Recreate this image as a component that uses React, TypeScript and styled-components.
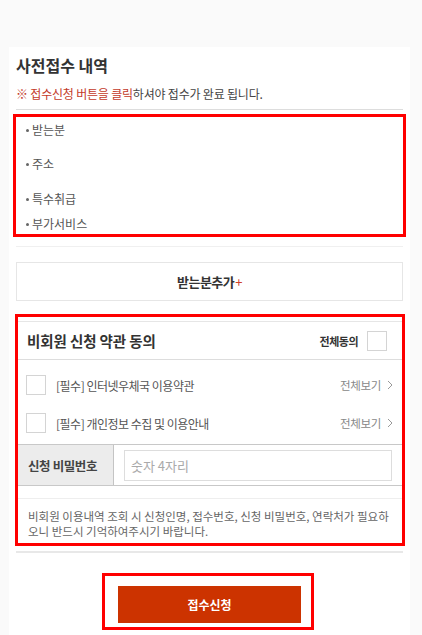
import React from "react";
import styled, { createGlobalStyle } from "styled-components";

const Global = createGlobalStyle`
  html, body {
    margin: 0;
    padding: 0;
    background: #fafafa;
  }
  body {
    font-family: "Noto Sans CJK KR", "Noto Sans", sans-serif;
    color: #333;
  }
  * { box-sizing: border-box; }
`;

const Panel = styled.div`
  margin: 47px 12px 0 9px;
  min-height: 588px;
  background: #fff;
  padding: 0 7px;
  display: flex;
  flex-direction: column;
`;

const Title = styled.h2`
  margin: 8px 0 0;
  font-size: 16px;
  line-height: 20px;
  font-weight: 700;
  color: #333;
`;

const Note = styled.p`
  margin: 11px 0 0;
  font-size: 12px;
  line-height: 16px;
  color: #444;
  letter-spacing: -0.2px;
`;

const Accent = styled.span`
  color: #c33a2a;
`;

const Divider = styled.hr<{ $color?: string; $top?: number; $size?: number }>`
  margin: ${(p) => p.$top ?? 0}px 0 0;
  border: 0;
  border-top: ${(p) => p.$size ?? 1}px solid ${(p) => p.$color ?? "#ddd"};
`;

const Highlight = styled.section<{ $left: number; $right: number; $top: number }>`
  margin: ${(p) => p.$top}px ${(p) => p.$right}px 0 ${(p) => p.$left}px;
  border: 3px solid #ff0000;
  display: flex;
  flex-direction: column;
`;

const ItemList = styled.ul`
  list-style: none;
  margin: 0;
  padding: 0 0 1px 10px;
`;

const Item = styled.li<{ $gap: number }>`
  margin-top: ${(p) => p.$gap}px;
  font-size: 12px;
  line-height: 18px;
  color: #555;
  display: flex;
  align-items: center;
  gap: 3px;
  &::before {
    content: "";
    width: 3px;
    height: 3px;
    border-radius: 50%;
    background: #666;
  }
`;

const AddButton = styled.button`
  margin-top: 15px;
  height: 39px;
  width: 100%;
  background: #fff;
  border: 1px solid #e6e6e6;
  font-family: inherit;
  font-size: 13px;
  font-weight: 700;
  color: #333;
  letter-spacing: -0.5px;
  cursor: pointer;
`;

const Plus = styled.span`
  color: #d0402a;
  font-weight: 400;
  margin-left: 1px;
`;

const TermsHead = styled.div`
  margin-top: 4px;
  border-top: 1px solid #e6e6e6;
  border-bottom: 1px solid #ddd;
  height: 39px;
  display: flex;
  align-items: center;
  justify-content: space-between;
  padding: 0 15px 0 9px;
`;

const TermsTitle = styled.h3`
  margin: 0;
  font-size: 14.5px;
  font-weight: 700;
  color: #333;
  letter-spacing: -0.1px;
`;

const AgreeAll = styled.label`
  display: flex;
  align-items: center;
  gap: 9px;
  font-size: 11px;
  font-weight: 700;
  color: #333;
  letter-spacing: -0.5px;
`;

const Box = styled.span<{ $size: number }>`
  width: ${(p) => p.$size}px;
  height: ${(p) => p.$size}px;
  border: 1px solid #d4d4d4;
  background: #fff;
  flex-shrink: 0;
`;

const Rows = styled.div`
  padding: 6px 0 2px;
`;

const TermRow = styled.div`
  height: 38px;
  display: flex;
  align-items: center;
  padding: 0 9px 0 8px;
`;

const TermText = styled.span`
  margin-left: 10px;
  flex: 1;
  font-size: 12px;
  color: #555;
  letter-spacing: -0.5px;
`;

const ViewAll = styled.a`
  font-size: 11.5px;
  color: #888;
  letter-spacing: -0.3px;
  display: flex;
  align-items: center;
  gap: 6px;
`;

const PwRow = styled.div`
  display: flex;
  height: 42px;
  border-top: 1px solid #c8c8c8;
  border-bottom: 1px solid #c8c8c8;
`;

const PwLabel = styled.div`
  width: 96px;
  background: #ececec;
  border-right: 1px solid #c4c4c4;
  display: flex;
  align-items: center;
  padding-left: 10px;
  font-size: 12.5px;
  font-weight: 700;
  color: #444;
  letter-spacing: -0.4px;
`;

const PwCell = styled.div`
  flex: 1;
  display: flex;
  align-items: center;
  padding: 0 10px;
`;

const PwInput = styled.input`
  width: 100%;
  height: 31px;
  border: 1px solid #ddd;
  padding: 0 6px;
  font-family: inherit;
  font-size: 13px;
  color: #333;
  &::placeholder {
    color: #aaa;
  }
`;

const Notice = styled.p`
  margin: 12px 0 0;
  border-top: 1px solid #eee;
  padding: 10px 0 4px 10px;
  font-size: 11.5px;
  line-height: 15px;
  color: #666;
  white-space: nowrap;
  letter-spacing: 0;
`;

const SubmitWrap = styled.div`
  align-self: center;
  margin-top: 20px;
  margin-left: -3px;
  border: 3px solid #ff0000;
  padding: 10px 10px 4px 13px;
`;

const Submit = styled.button`
  display: block;
  width: 183px;
  height: 37px;
  border: 0;
  background: #cc3300;
  color: #fff;
  font-family: inherit;
  font-size: 12px;
  font-weight: 700;
  cursor: pointer;
`;

const items = [
  { label: "받는분", gap: 4 },
  { label: "주소", gap: 16 },
  { label: "특수취급", gap: 17 },
  { label: "부가서비스", gap: 7 },
];

const terms = ["[필수] 인터넷우체국 이용약관", "[필수] 개인정보 수집 및 이용안내"];

export default function App() {
  return (
    <>
      <Global />
      <Panel>
        <Title>사전접수 내역</Title>
        <Note>
          <Accent>※ 접수신청 버튼을 클릭</Accent>하셔야 접수가 완료 됩니다.
        </Note>
        <Divider $top={7} $color="#ddd" />
        <Highlight $top={4} $left={-3} $right={-3}>
          <ItemList>
            {items.map((it) => (
              <Item key={it.label} $gap={it.gap}>
                {it.label}
              </Item>
            ))}
          </ItemList>
        </Highlight>
        <Divider $top={9} $color="#f0f0f0" />
        <AddButton>
          받는분추가<Plus>+</Plus>
        </AddButton>
        <Highlight $top={13} $left={-1} $right={-2}>
          <TermsHead>
            <TermsTitle>비회원 신청 약관 동의</TermsTitle>
            <AgreeAll>
              전체동의
              <Box $size={20} />
            </AgreeAll>
          </TermsHead>
          <Rows>
            {terms.map((t) => (
              <TermRow key={t}>
                <Box $size={20} />
                <TermText>{t}</TermText>
                <ViewAll>
                  전체보기
                  <svg width="6" height="10" viewBox="0 0 6 10">
                    <path d="M1 1l4 4-4 4" fill="none" stroke="#999" strokeWidth="1" />
                  </svg>
                </ViewAll>
              </TermRow>
            ))}
          </Rows>
          <PwRow>
            <PwLabel>신청 비밀번호</PwLabel>
            <PwCell>
              <PwInput placeholder="숫자 4자리" />
            </PwCell>
          </PwRow>
          <Notice>
            비회원 이용내역 조회 시 신청인명, 접수번호, 신청 비밀번호, 연락처가 필요하
            <br />
            오니 반드시 기억하여주시기 바랍니다.
          </Notice>
        </Highlight>
        <Divider $top={5} $color="#e8e8e8" $size={2} />
        <SubmitWrap>
          <Submit>접수신청</Submit>
        </SubmitWrap>
      </Panel>
    </>
  );
}
